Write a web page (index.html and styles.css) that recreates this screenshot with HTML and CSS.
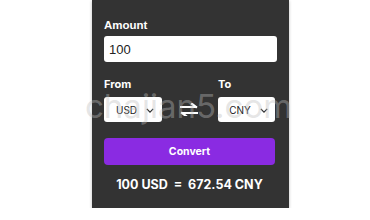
FILE: index.html
```html
<!DOCTYPE html>
<html lang="en">
<head>
    <meta charset="UTF-8">
    <meta name="viewport" content="width=device-width, initial-scale=1.0">
    <title>Currency Converter</title>
    <link rel="stylesheet" href="styles.css">
</head>
<body>
    <div class="container">
        <div class="form-group">
            <label for="amount">Amount</label>
            <input type="text" id="amount" value="100">
        </div>

        <div class="currency-row">
            <div class="currency-col">
                <label for="from">From</label>
                <div class="select-box">
                    <span>USD</span>
                    <svg class="chevron" viewBox="0 0 10 6" width="8" height="5"><path d="M1 1l4 4 4-4" fill="none" stroke="#333" stroke-width="1.6"/></svg>
                </div>
            </div>
            <div class="swap">
                <svg viewBox="0 0 18 13" width="18" height="13">
                    <path d="M1 4h15M12 1l4 3" fill="none" stroke="#fff" stroke-width="2.2" stroke-linecap="square"/>
                    <path d="M17 10H2M6 13l-4-3" fill="none" stroke="#fff" stroke-width="2.2" stroke-linecap="square"/>
                </svg>
            </div>
            <div class="currency-col">
                <label for="to">To</label>
                <div class="select-box">
                    <span>CNY</span>
                    <svg class="chevron" viewBox="0 0 10 6" width="8" height="5"><path d="M1 1l4 4 4-4" fill="none" stroke="#333" stroke-width="1.6"/></svg>
                </div>
            </div>
        </div>

        <button type="button">Convert</button>

        <div id="result">100 USD &nbsp;= &nbsp;672.54 CNY</div>

        <div class="watermark">chajian5.com</div>
    </div>
</body>
</html>
```

FILE: styles.css
```css
body {
    margin: 0;
    background-color: #fff;
    font-family: Inter, "Open Sans", Arial, sans-serif;
}
.container {
    position: relative;
    width: 173px;
    height: 208px;
    margin-left: 92px;
    padding: 0 12px;
    background-color: #333;
    box-shadow: 0 1px 3px rgba(0,0,0,0.25);
}
.form-group {
    padding-top: 19px;
}
label {
    display: block;
    color: #fff;
    font-family: Arial, "Liberation Sans", sans-serif;
    font-weight: bold;
    font-size: 11.5px;
    margin-bottom: 5px;
}
input {
    display: block;
    box-sizing: border-box;
    width: 173px;
    height: 26px;
    padding: 0 5px;
    border: none;
    border-radius: 3px;
    font-family: Arial, "Liberation Sans", sans-serif;
    font-size: 13px;
    color: #222;
}
.currency-row {
    display: grid;
    grid-template-columns: 58px 56px 57px;
    align-items: end;
    margin-top: 15px;
}
.currency-row label {
    font-family: Inter, sans-serif;
    font-size: 11px;
    margin-bottom: 6px;
}
.select-box {
    height: 25px;
    background: #fff;
    border-radius: 3px;
    display: flex;
    align-items: center;
    justify-content: center;
    gap: 9px;
    padding-left: 4px;
    font-size: 10px;
    color: #222;
}
.chevron {
    margin-top: 1px;
}
.swap {
    display: flex;
    justify-content: center;
    align-items: center;
    height: 25px;
    padding-right: 2px;
}
button {
    display: block;
    width: 171px;
    height: 27px;
    margin-top: 16px;
    background-color: #8a2be2;
    color: #fff;
    border: none;
    border-radius: 4px;
    font-family: Inter, sans-serif;
    font-weight: bold;
    font-size: 10.5px;
}
#result {
    margin-top: 12px;
    color: #fff;
    text-align: center;
    font-weight: bold;
    font-size: 12.5px;
    width: 171px;
}
.watermark {
    position: absolute;
    left: -7px;
    top: 92px;
    font-family: Inter, sans-serif;
    font-size: 33px;
    line-height: 28px;
    color: rgba(190,190,190,0.4);
    pointer-events: none;
    white-space: nowrap;
}
```
